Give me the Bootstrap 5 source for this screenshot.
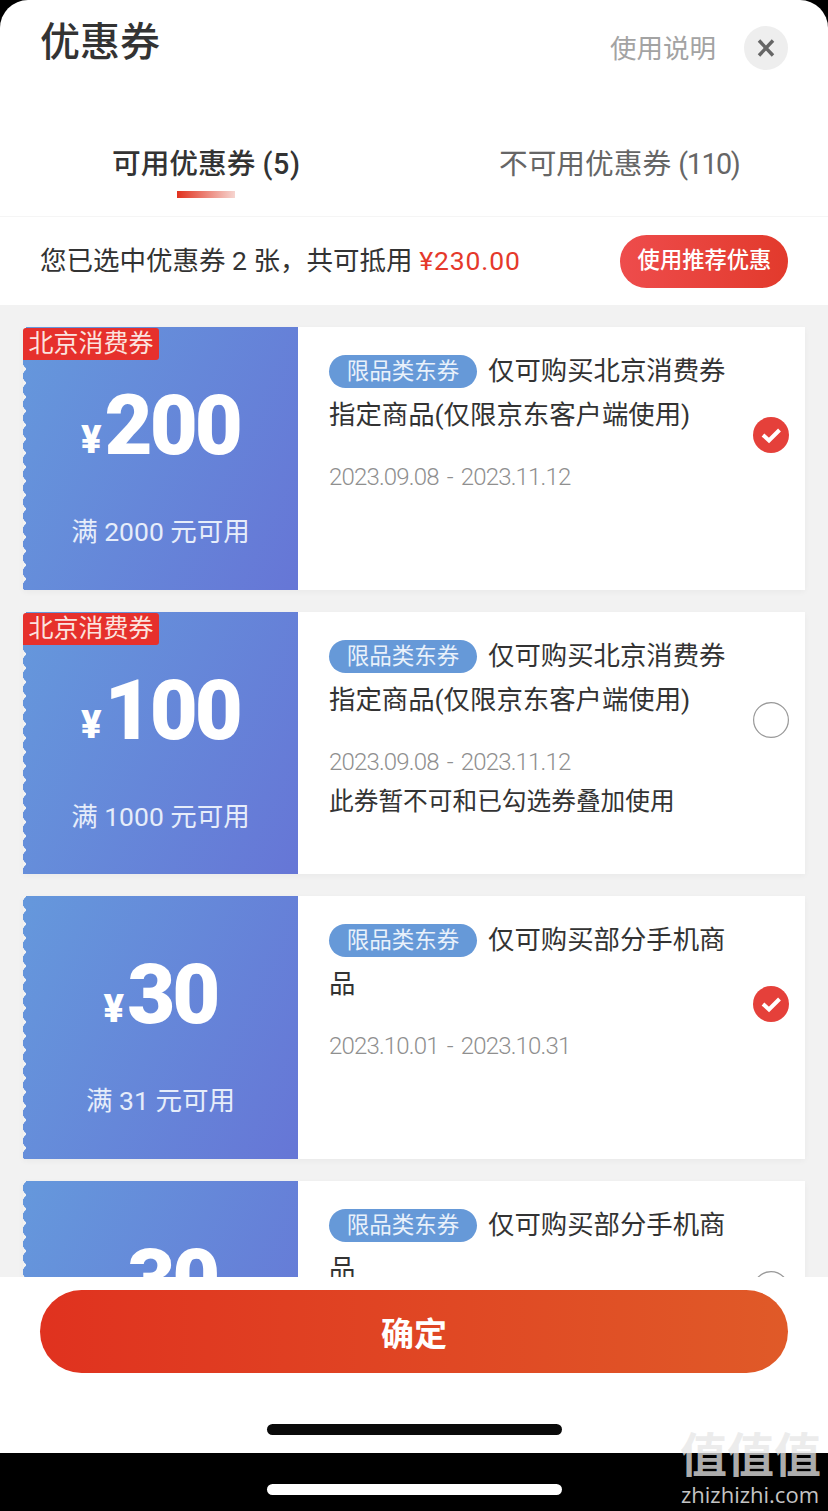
<!DOCTYPE html>
<html lang="zh-CN">
<head>
  <meta charset="UTF-8" />
  <meta name="viewport" content="width=device-width, initial-scale=1.0"/>
  <title>优惠券</title>
  <link href="https://cdn.jsdelivr.net/npm/bootstrap@5.3.0/dist/css/bootstrap.min.css" rel="stylesheet">
  <style>
    html, body { height: 1511px; overflow: hidden; background: #000; }
    body { font-family: "Roboto", "Noto Sans CJK SC", sans-serif; color: #333; }

    .sheet { height: 1453px; background: #fff; border-radius: 28px 28px 0 0; }

    .sheet-head { height: 118px; flex: none; padding: 20px 40px 0 40px; }
    .sheet-title { font-size: 40px; line-height: 46px; font-weight: 500; color: #333; margin: 0; }
    .help-link { font-size: 26.5px; line-height: 58px; color: #a3a3a3; margin-right: 28px; }
    .close-btn { width: 44px; height: 44px; margin-top: 6px; background: #eee; border: 0; padding: 0; }

    .tab-bar { height: 99px; flex: none; border-bottom: 1px solid #f5f5f5; }
    .tab-item { font-size: 28.7px; line-height: 40px; padding-top: 26px; color: #666; }
    .tab-item.on { color: #333; font-weight: 500; }
    .tab-one { margin-left: 112px; width: 188px; }
    .tab-one span { letter-spacing: .6px; }
    .tab-two { margin-left: 199px; }
    .tab-two span { letter-spacing: -1.4px; }
    .tab-line { width: 58px; height: 7px; margin: 7px auto 0; background: linear-gradient(90deg, #e1321f, #f6d5d0); }

    .pick-bar { height: 88px; flex: none; padding: 0 40px; }
    .pick-text { font-size: 26.5px; color: #333; white-space: nowrap; }
    .pick-text span { color: #e5392b; letter-spacing: .9px; }
    .pick-btn { width: 168px; height: 53px; padding: 0 0 0 1px; border: 0; font-size: 22.3px; font-weight: 500; color: #fff; background: linear-gradient(90deg, #ee4c4c, #e23a2c); }

    .coupon-list { background: #f2f2f2; padding: 22px 23px 0; gap: 22px; min-height: 0; }
    .coupon-item { height: 262.5px; flex: none; background: #fff; box-shadow: 0 2px 6px rgba(0, 0, 0, .04); }

    .coupon-left { width: 275px; flex: none; color: #fff; background: linear-gradient(115deg, #6598dc, #6676d6); }
    .coupon-left::before {
      content: ""; position: absolute; left: 0; top: 0; bottom: 0; width: 3px;
      background: radial-gradient(circle at 7px 50%, transparent 7px, #f2f2f2 7.5px) 0 0 / 3px 14px repeat-y;
    }
    .area-tag { position: absolute; left: 0; top: 1px; width: 136px; height: 32px; background: #e6302c; border-radius: 3px 3px 3px 0; font-size: 25px; line-height: 32px; text-align: center; color: #fbe3df; }
    .price { height: 90px; margin-top: 54px; font-weight: 900; font-size: 83px; line-height: 90px; letter-spacing: -3px; }
    .price i { font-style: normal; font-size: 38px; letter-spacing: 0; margin-right: 3px; position: relative; top: -1px; }
    .need { margin-top: 43px; font-size: 26.5px; line-height: 36px; color: #e6edfa; }

    .coupon-right { padding: 22px 16px 0 32px; }
    .coupon-text { width: 400px; }
    .coupon-name { font-size: 26.4px; line-height: 44px; color: #333; margin: 0 0 0 -1px; }
    .kind-pill { display: inline-block; width: 148px; height: 33px; line-height: 32px; margin-right: 11px; border-radius: 17px; background: #6699d8; color: #e9f1fb; font-size: 22.5px; text-align: center; vertical-align: 1px; }
    .coupon-date { margin: 22px 0 0 -1px; font-size: 24px; font-weight: 300; line-height: 36px; color: #8f8f8f; letter-spacing: -.83px; word-spacing: 3px; }
    .coupon-note { margin: 4px 0 0 -1px; font-size: 24.7px; line-height: 36px; color: #333; white-space: nowrap; }
    .pick-mark { width: 36px; height: 36px; margin-top: 68px; flex: none; margin-left: auto; }

    .sheet-foot { height: 176px; flex: none; padding: 13px 40px 0; }
    .ok-btn { height: 83px; padding-top: 8px; border: 0; font-size: 33px; font-weight: 700; color: #fff; background: linear-gradient(90deg, #e0321f, #e05a28); }
    .home-bar { width: 295px; height: 11px; margin: 51px auto 0; background: #0a0a0a; }
    .home-bar-two { position: absolute; left: 267px; top: 1484px; width: 295px; height: 11px; background: #fff; }

    .site-mark { position: absolute; right: 8px; top: 1429px; width: 140px; text-align: center; }
    .site-mark b { display: block; font-size: 47px; line-height: 53px; font-weight: 700; color: rgba(230, 230, 230, .76); white-space: nowrap; }
    .site-mark span { display: block; font-family: "Open Sans", sans-serif; font-size: 22px; line-height: 24px; color: #c4c4c4; white-space: nowrap; }
  </style>
</head>
<body class="position-relative">
  <div class="sheet d-flex flex-column overflow-hidden">

    <!-- Header -->
    <div class="sheet-head d-flex justify-content-between align-items-start">
      <h1 class="sheet-title">优惠券</h1>
      <div class="d-flex align-items-start">
        <span class="help-link">使用说明</span>
        <button class="close-btn rounded-circle d-flex align-items-center justify-content-center" aria-label="关闭">
          <svg width="20" height="20" viewBox="0 0 20 20"><path d="M3 2.5l14 15M17 2.5L3 17.5" stroke="#666" stroke-width="3.4" fill="none"/></svg>
        </button>
      </div>
    </div>

    <!-- Tabs -->
    <div class="tab-bar d-flex">
      <div class="tab-item tab-one on text-nowrap">
        可用优惠券 <span>(5)</span>
        <div class="tab-line"></div>
      </div>
      <div class="tab-item tab-two text-nowrap">不可用优惠券 <span>(110)</span></div>
    </div>

    <!-- Selected summary -->
    <div class="pick-bar d-flex align-items-center justify-content-between">
      <div class="pick-text">您已选中优惠券 2 张，共可抵用 <span>¥230.00</span></div>
      <button class="pick-btn rounded-pill">使用推荐优惠</button>
    </div>

    <!-- Coupons -->
    <div class="coupon-list d-flex flex-column flex-grow-1 overflow-hidden">

      <div class="coupon-item d-flex">
        <div class="coupon-left position-relative text-center">
          <div class="area-tag">北京消费券</div>
          <div class="price"><i>¥</i>200</div>
          <div class="need">满 2000 元可用</div>
        </div>
        <div class="coupon-right d-flex flex-grow-1">
          <div class="coupon-text">
            <p class="coupon-name"><span class="kind-pill">限品类东券</span>仅可购买北京消费券指定商品(仅限京东客户端使用)</p>
            <div class="coupon-date">2023.09.08 - 2023.11.12</div>
          </div>
          <svg class="pick-mark" viewBox="0 0 36 36"><circle cx="18" cy="18" r="18" fill="#e5403a"/><path d="M10 18l6 5.5L26.5 13" stroke="#fff" stroke-width="4" fill="none"/></svg>
        </div>
      </div>

      <div class="coupon-item d-flex">
        <div class="coupon-left position-relative text-center">
          <div class="area-tag">北京消费券</div>
          <div class="price"><i>¥</i>100</div>
          <div class="need">满 1000 元可用</div>
        </div>
        <div class="coupon-right d-flex flex-grow-1">
          <div class="coupon-text">
            <p class="coupon-name"><span class="kind-pill">限品类东券</span>仅可购买北京消费券指定商品(仅限京东客户端使用)</p>
            <div class="coupon-date">2023.09.08 - 2023.11.12</div>
            <div class="coupon-note">此券暂不可和已勾选券叠加使用</div>
          </div>
          <svg class="pick-mark" viewBox="0 0 36 36"><circle cx="18" cy="18" r="17.4" fill="#fff" stroke="#999" stroke-width="1.2"/></svg>
        </div>
      </div>

      <div class="coupon-item d-flex">
        <div class="coupon-left position-relative text-center">
          <div class="price"><i>¥</i>30</div>
          <div class="need">满 31 元可用</div>
        </div>
        <div class="coupon-right d-flex flex-grow-1">
          <div class="coupon-text">
            <p class="coupon-name"><span class="kind-pill">限品类东券</span>仅可购买部分手机商品</p>
            <div class="coupon-date">2023.10.01 - 2023.10.31</div>
          </div>
          <svg class="pick-mark" viewBox="0 0 36 36"><circle cx="18" cy="18" r="18" fill="#e5403a"/><path d="M10 18l6 5.5L26.5 13" stroke="#fff" stroke-width="4" fill="none"/></svg>
        </div>
      </div>

      <div class="coupon-item d-flex">
        <div class="coupon-left position-relative text-center">
          <div class="price"><i>¥</i>30</div>
          <div class="need">满 31 元可用</div>
        </div>
        <div class="coupon-right d-flex flex-grow-1">
          <div class="coupon-text">
            <p class="coupon-name"><span class="kind-pill">限品类东券</span>仅可购买部分手机商品</p>
            <div class="coupon-date">2023.10.01 - 2023.10.31</div>
          </div>
          <svg class="pick-mark" viewBox="0 0 36 36"><circle cx="18" cy="18" r="17.4" fill="#fff" stroke="#999" stroke-width="1.2"/></svg>
        </div>
      </div>

    </div>

    <!-- Footer -->
    <div class="sheet-foot bg-white">
      <button class="ok-btn rounded-pill w-100">确定</button>
      <div class="home-bar rounded-pill"></div>
    </div>
  </div>

  <div class="home-bar-two rounded-pill"></div>
  <div class="site-mark"><b>值值值</b><span>zhizhizhi.com</span></div>

  <script src="https://cdn.jsdelivr.net/npm/bootstrap@5.3.0/dist/js/bootstrap.bundle.min.js"></script>
</body>
</html>
